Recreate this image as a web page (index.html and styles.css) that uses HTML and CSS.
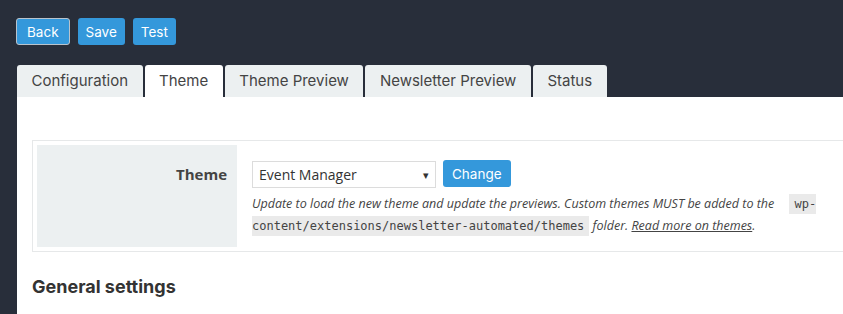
FILE: index.html
```html
<!DOCTYPE html>
<html lang="en">
<head>
    <meta charset="UTF-8">
    <meta name="viewport" content="width=device-width, initial-scale=1.0">
    <title>Newsletter Automated</title>
    <link rel="stylesheet" href="styles.css">
</head>
<body>
    <div class="wrap">
        <div class="actions">
            <button class="btn btn-back">Back</button>
            <button class="btn">Save</button>
            <button class="btn">Test</button>
        </div>

        <div class="tabs">
            <a class="tab" href="#">Configuration</a>
            <a class="tab active" href="#">Theme</a>
            <a class="tab" href="#">Theme Preview</a>
            <a class="tab" href="#">Newsletter Preview</a>
            <a class="tab" href="#">Status</a>
        </div>

        <div class="panel">
            <table class="form-table">
                <tr>
                    <th>Theme</th>
                    <td>
                        <div class="theme-row">
                            <div class="select">
                                <span>Event Manager</span>
                                <span class="arrow">&#9662;</span>
                            </div>
                            <button class="btn btn-change">Change</button>
                        </div>
                        <p class="description">
                            Update to load the new theme and update the previews. Custom themes MUST be added to the
                            <code>wp-content/extensions/newsletter-automated/themes</code> folder.
                            <a href="#">Read more on themes</a>.
                        </p>
                    </td>
                </tr>
            </table>

            <h3 class="section-title">General settings</h3>
        </div>
    </div>
</body>
</html>
```

FILE: styles.css
```css
body {
    margin: 0;
    background-color: #282e3a;
    font-family: "Open Sans", sans-serif;
    color: #444;
    overflow: hidden;
}

.wrap {
    padding: 18px 0 0 16px;
}

.actions {
    display: flex;
    gap: 8px;
}

.btn {
    height: 27px;
    padding: 0 8px;
    border: none;
    border-radius: 3px;
    background: #3498db;
    color: #fff;
    font-family: "Inter", sans-serif;
    font-size: 13.5px;
    cursor: pointer;
}

.btn-back {
    border: 1px solid #b9c3cc;
    padding: 0 10px;
}

.tabs {
    display: flex;
    gap: 2px;
    margin-top: 20px;
    padding-left: 1px;
}

.tab {
    display: block;
    height: 32px;
    line-height: 32px;
    padding: 0 14.5px;
    background: #ecf0f1;
    border-radius: 3px 3px 0 0;
    color: #444;
    font-family: "Inter", sans-serif;
    font-size: 15px;
    font-weight: 400;
    text-decoration: none;
}

.tab.active {
    background: #fff;
}

.panel {
    background: #fff;
    margin-left: 1px;
    width: 860px;
    padding: 43px 15px 30px;
}

.form-table {
    width: 870px;
    border: 1px solid #e6e8e9;
    border-spacing: 4px;
}

.form-table th {
    width: 190px;
    background: #ecf0f1;
    text-align: right;
    vertical-align: top;
    padding: 19px 10px 0 0;
    font-size: 15px;
    font-weight: bold;
    color: #444;
}

.form-table td {
    padding: 15px 30px 10px 11px;
    vertical-align: top;
}

.theme-row {
    display: flex;
    align-items: flex-start;
    gap: 7px;
}

.select {
    width: 170px;
    height: 25px;
    padding: 0 6px;
    border: 1px solid #dcdcdc;
    display: flex;
    align-items: center;
    justify-content: space-between;
    font-size: 14px;
    color: #333;
    margin-top: 1px;
}

.select .arrow {
    font-size: 11px;
    color: #333;
}

.btn-change {
    padding: 0 9px;
    font-size: 13.5px;
}

.description {
    margin: 5px 0 0;
    font-size: 12.5px;
    font-style: italic;
    line-height: 21px;
    color: #444;
}

.description code {
    font-family: "DejaVu Sans Mono", monospace;
    font-style: normal;
    font-size: 12px;
    background: #eaeaea;
    padding: 3px 5px;
    margin-left: 12px;
}

.description a {
    color: #444;
}

.section-title {
    margin: 24px 0 0;
    font-family: "Inter", sans-serif;
    font-size: 18px;
    font-weight: bold;
    color: #333;
}
```
